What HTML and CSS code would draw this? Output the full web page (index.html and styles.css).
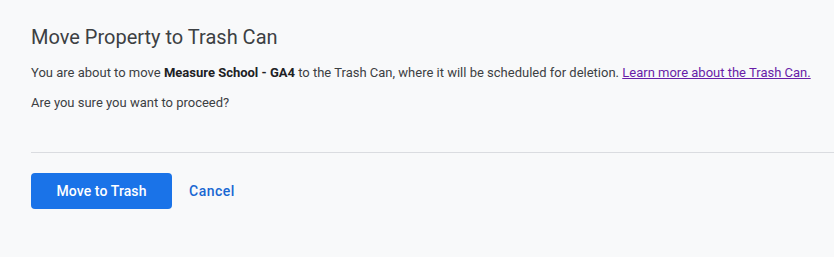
FILE: index.html
```html
<!DOCTYPE html>
<html>
<head>
<meta charset="utf-8">
<link rel="stylesheet" href="styles.css">
</head>
<body>
<div class="dialog">
  <div class="content">
    <h1 class="title">Move Property to Trash Can</h1>
    <p class="text">You are about to move <b>Measure School - GA4</b> to the Trash Can, where it will be scheduled for deletion. <a class="link" href="#">Learn more about the Trash Can.</a></p>
    <p class="text">Are you sure you want to proceed?</p>
  </div>
  <div class="actions">
    <button class="primary">Move to Trash</button>
    <button class="secondary">Cancel</button>
  </div>
</div>
</body>
</html>
```
FILE: styles.css
```css
html, body {
  margin: 0;
  padding: 0;
  background: #f8f9fa;
}
body {
  font-family: Roboto, "Noto Sans", sans-serif;
  color: #3c4043;
  width: 834px;
  height: 257px;
  overflow: hidden;
}
.dialog {
  padding: 23px 0 0 31px;
}
.content {
  padding-bottom: 28px;
  border-bottom: 1px solid #dadce0;
}
.title {
  margin: 0 0 12px;
  font-size: 20px;
  font-weight: 400;
  line-height: 28px;
  color: #3c4043;
}
.text {
  margin: 0 0 11px;
  font-size: 13px;
  line-height: 19px;
  color: #3c4043;
}
.text:last-child {
  margin-bottom: 12px;
}
.text b {
  font-weight: 700;
  color: #202124;
}
.link {
  color: #681da8;
}
.actions {
  display: flex;
  align-items: center;
  gap: 9px;
  padding-top: 20px;
}
.primary {
  height: 36px;
  width: 141px;
  border: none;
  border-radius: 4px;
  background: #1a73e8;
  color: #fff;
  font-family: Roboto, sans-serif;
  font-size: 14px;
  font-weight: 500;
  letter-spacing: 0.1px;
}
.secondary {
  border: none;
  background: none;
  padding: 0 8px;
  height: 36px;
  color: #1967d2;
  font-family: Roboto, sans-serif;
  font-size: 14px;
  font-weight: 500;
  letter-spacing: 0.5px;
}
```
